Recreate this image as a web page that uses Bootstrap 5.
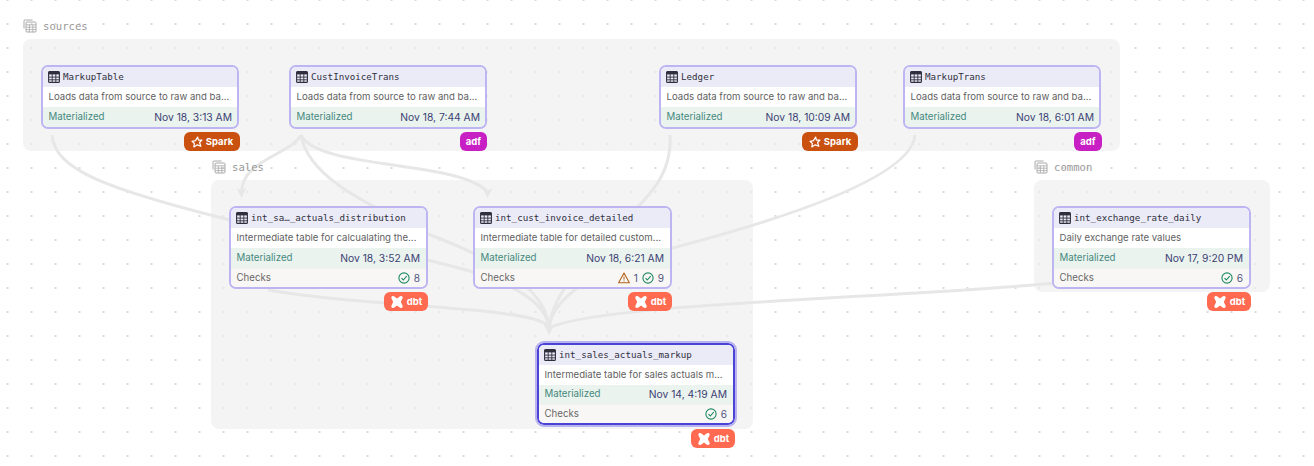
<!DOCTYPE html>
<html lang="en">
<head>
<meta charset="utf-8">
<title>Lineage</title>
<link href="https://cdn.jsdelivr.net/npm/bootstrap@5.3.0/dist/css/bootstrap.min.css" rel="stylesheet">
<style>
html,body{margin:0;height:100%;background:#fff}
.flow{position:relative;width:1314px;height:466px;overflow:hidden;font-family:Inter,"Liberation Sans",sans-serif;background-color:#fff;background-image:radial-gradient(circle at 1px 1px,#dcdcdc 1px,transparent 1.3px);background-size:24px 24px;background-position:6.5px -1px}
.grp{position:absolute;background:rgba(236,236,236,.58);border-radius:8px}
.g1{left:23px;top:39px;width:1097px;height:112px}
.g2{left:211px;top:180px;width:542px;height:249px}
.g3{left:1034px;top:180px;width:236px;height:112px}
.glabel{position:absolute;height:14px;color:#999;font:10.6px/14px "DejaVu Sans Mono",monospace;gap:6px}
.glabel svg{color:#aaa}
.l1{left:23px;top:19px}.l2{left:212px;top:160px}.l3{left:1034px;top:160px}
.edges{position:absolute;left:0;top:0}
.node{position:absolute;width:199px;border:2px solid #bdb5f2;border-radius:7px;overflow:hidden;background:#fff;font-size:9.6px;line-height:14px}
.n1{left:41px;top:65px;width:198px}.n2{left:289px;top:65px;width:198px}.n3{left:659px;top:65px;width:198px}.n4{left:903px;top:65px;width:198px}
.n5{left:229px;top:206px}.n6{left:473px;top:206px}.n7{left:1052px;top:206px}
.node.n8{left:537px;top:343px;width:198px;height:82px;border-color:#4b43d6;outline:2px solid #b8b2f1}
.nhead{height:20px;padding:0 5px;background:#ebebf7;gap:3px;color:#2f2f3d;font:9.2px/20px "DejaVu Sans Mono",monospace}
.n5 .nhead,.n6 .nhead,.n7 .nhead,.n8 .nhead{padding-bottom:1px}
.nrow{height:20px;padding:0 6px 0 5.5px}
.n1 .nrow,.n2 .nrow,.n3 .nrow,.n4 .nrow{padding-right:5px}
.ndesc{color:#5f5f5f;white-space:nowrap}
.nmat{background:#ebf3ef;color:#46897d;font-size:9.7px}
.nmat .when{color:#3b3f73;font-size:10.3px}
.nchk{height:19px;background:#f9f7f5;color:#666;border-top:1px solid #f1f1ee;font-size:9.7px}
.num{color:#4f5480;font-size:10.1px}
.tag{position:absolute;height:19px;border-radius:6px;color:#fff;font:700 9.5px/19px Inter,sans-serif;padding:0;gap:3px}
.spark{background:#c9500f;width:56px}
.adf{background:#c81fc4;width:27px}
.dbt{background:#ff6a50;width:44px}
.t1{left:184px;top:132px}.t2{left:460px;top:132px}.t3{left:802px;top:132px}.t4{left:1074px;top:132px;width:28px}
.t5{left:384px;top:292px}.t6{left:628px;top:292px}.t7{left:1207px;top:292px}.t8{left:691px;top:429px}
</style>
</head>
<body>
<svg width="0" height="0" class="position-absolute">
<defs>
<symbol id="tb" viewBox="0 0 12 12"><rect x=".6" y=".6" width="10.8" height="10.8" rx="1" fill="none" stroke="currentColor" stroke-width="1.1"/><rect x=".6" y=".6" width="10.8" height="2.8" fill="currentColor"/><path d="M.6 6.1h10.8M.6 8.8h10.8M4.2 3v8.4M7.8 3v8.4" fill="none" stroke="currentColor" stroke-width=".9"/></symbol>
<symbol id="gt" viewBox="0 0 14 14"><path d="M1 9.5V2a1 1 0 0 1 1-1h7.5" fill="none" stroke="currentColor" stroke-width="1"/><rect x="3" y="3" width="10" height="10" rx="1" fill="none" stroke="currentColor" stroke-width="1"/><path d="M3 5.800h10M3 8.200h10M3 10.600h10M6.400 5.800V13M9.800 5.800V13" fill="none" stroke="currentColor" stroke-width=".8"/></symbol>
<symbol id="ok" viewBox="0 0 12 12"><circle cx="6" cy="6" r="5.100" fill="none" stroke="#1f8a62" stroke-width="1.100"/><path d="M3.500 6.200 5.300 8 8.700 4.200" fill="none" stroke="#1f8a62" stroke-width="1.100"/></symbol>
<symbol id="wn" viewBox="0 0 12 12"><path d="M6 1 11.400 10.800H.6Z" fill="none" stroke="#b4641c" stroke-width="1.100" stroke-linejoin="round"/><path d="M6 4.400V7.600M6 8.500v1" fill="none" stroke="#b4641c" stroke-width="1"/></symbol>
<symbol id="db" viewBox="0 0 16 16"><path fill="#fff" d="M3 1.200Q4 .8 5 1.600L8 4l3-2.400q1-.8 2-.4 2 .8 1.500 2.300-.3.8-2.100 4.500 1.800 3.700 2.100 4.500.5 1.500-1.500 2.300-1 .4-2-.4L8 12l-3 2.400q-1 .8-2 .4-2-.8-1.500-2.300.3-.8 2.100-4.500-1.800-3.700-2.100-4.500Q1 2 3 1.200Z"/></symbol>
<symbol id="sp" viewBox="0 0 14 14"><path fill="none" stroke="#fff" stroke-width="1.400" stroke-linejoin="round" d="M7.800 1.200 8.600 4.900 12.800 4.700 10 7.600 11.500 12 7.300 10.300 3.300 12.800 4 8.800 1.200 6.300 5.200 5.400Z"/></symbol>
</defs>
</svg>

<main class="flow">
  <div class="grp g1"></div>
  <div class="grp g2"></div>
  <div class="grp g3"></div>

  <svg class="edges" width="1314" height="466" fill="none" stroke="#e7e7e7" stroke-width="3">
    <path d="M52 135C54 170 110 190 230 220C300 237 400 250 473 272C510 285 546 300 549 328"/>
    <path d="M301 135C290 155 242 160 241.500 192"/>
    <path d="M301 135C318 170 460 160 487.500 192"/>
    <path d="M301 135C308 178 370 205 423 232C470 250 546 280 549 328"/>
    <path d="M670 135C672 170 655 190 630 215C590 255 553 290 549 328"/>
    <path d="M915 135C912 175 800 215 665 250C590 270 552 300 549 328"/>
    <path d="M268 290C340 302 400 303 492 312C525 316 546 320 549 328"/>
    <path d="M1056 283C900 298 600 303 549 328"/>
    <path fill="#e7e7e7" stroke="none" d="M236.500 188 241.500 198 246.500 188 241.500 190.500ZM482.500 188 487.500 198 492.500 188 487.500 190.500ZM544 325 549 335.500 554 325 549 327Z"/>
  </svg>

  <div class="glabel l1 d-flex align-items-center"><svg width="14" height="14"><use href="#gt"/></svg>sources</div>
  <div class="glabel l2 d-flex align-items-center"><svg width="14" height="14"><use href="#gt"/></svg>sales</div>
  <div class="glabel l3 d-flex align-items-center"><svg width="14" height="14"><use href="#gt"/></svg>common</div>

  <div class="card node n1">
    <div class="nhead d-flex align-items-center"><svg width="12" height="12"><use href="#tb"/></svg>MarkupTable</div>
    <div class="nrow ndesc d-flex align-items-center">Loads data from source to raw and ba...</div>
    <div class="nrow nmat d-flex align-items-center justify-content-between"><span>Materialized</span><span class="when">Nov 18, 3:13 AM</span></div>
  </div>
  <div class="card node n2">
    <div class="nhead d-flex align-items-center"><svg width="12" height="12"><use href="#tb"/></svg>CustInvoiceTrans</div>
    <div class="nrow ndesc d-flex align-items-center">Loads data from source to raw and ba...</div>
    <div class="nrow nmat d-flex align-items-center justify-content-between"><span>Materialized</span><span class="when">Nov 18, 7:44 AM</span></div>
  </div>
  <div class="card node n3">
    <div class="nhead d-flex align-items-center"><svg width="12" height="12"><use href="#tb"/></svg>Ledger</div>
    <div class="nrow ndesc d-flex align-items-center">Loads data from source to raw and ba...</div>
    <div class="nrow nmat d-flex align-items-center justify-content-between"><span>Materialized</span><span class="when">Nov 18, 10:09 AM</span></div>
  </div>
  <div class="card node n4">
    <div class="nhead d-flex align-items-center"><svg width="12" height="12"><use href="#tb"/></svg>MarkupTrans</div>
    <div class="nrow ndesc d-flex align-items-center">Loads data from source to raw and ba...</div>
    <div class="nrow nmat d-flex align-items-center justify-content-between"><span>Materialized</span><span class="when">Nov 18, 6:01 AM</span></div>
  </div>

  <div class="card node n5">
    <div class="nhead d-flex align-items-center"><svg width="12" height="12"><use href="#tb"/></svg>int_sa…_actuals_distribution</div>
    <div class="nrow ndesc d-flex align-items-center">Intermediate table for calcualating the...</div>
    <div class="nrow nmat d-flex align-items-center justify-content-between"><span>Materialized</span><span class="when">Nov 18, 3:52 AM</span></div>
    <div class="nrow nchk d-flex align-items-center justify-content-between"><span>Checks</span><span class="num d-flex align-items-center gap-1"><svg width="12" height="12"><use href="#ok"/></svg>8</span></div>
  </div>
  <div class="card node n6">
    <div class="nhead d-flex align-items-center"><svg width="12" height="12"><use href="#tb"/></svg>int_cust_invoice_detailed</div>
    <div class="nrow ndesc d-flex align-items-center">Intermediate table for detailed custom...</div>
    <div class="nrow nmat d-flex align-items-center justify-content-between"><span>Materialized</span><span class="when">Nov 18, 6:21 AM</span></div>
    <div class="nrow nchk d-flex align-items-center justify-content-between"><span>Checks</span><span class="num d-flex align-items-center gap-1"><svg width="12" height="12"><use href="#wn"/></svg>1<svg width="12" height="12"><use href="#ok"/></svg>9</span></div>
  </div>
  <div class="card node n7">
    <div class="nhead d-flex align-items-center"><svg width="12" height="12"><use href="#tb"/></svg>int_exchange_rate_daily</div>
    <div class="nrow ndesc d-flex align-items-center">Daily exchange rate values</div>
    <div class="nrow nmat d-flex align-items-center justify-content-between"><span>Materialized</span><span class="when">Nov 17, 9:20 PM</span></div>
    <div class="nrow nchk d-flex align-items-center justify-content-between"><span>Checks</span><span class="num d-flex align-items-center gap-1"><svg width="12" height="12"><use href="#ok"/></svg>6</span></div>
  </div>
  <div class="card node n8">
    <div class="nhead d-flex align-items-center"><svg width="12" height="12"><use href="#tb"/></svg>int_sales_actuals_markup</div>
    <div class="nrow ndesc d-flex align-items-center">Intermediate table for sales actuals m...</div>
    <div class="nrow nmat d-flex align-items-center justify-content-between"><span>Materialized</span><span class="when">Nov 14, 4:19 AM</span></div>
    <div class="nrow nchk d-flex align-items-center justify-content-between"><span>Checks</span><span class="num d-flex align-items-center gap-1"><svg width="12" height="12"><use href="#ok"/></svg>6</span></div>
  </div>

  <span class="badge tag spark t1 d-flex align-items-center justify-content-center"><svg width="12" height="12"><use href="#sp"/></svg>Spark</span>
  <span class="badge tag adf t2 d-flex align-items-center justify-content-center">adf</span>
  <span class="badge tag spark t3 d-flex align-items-center justify-content-center"><svg width="12" height="12"><use href="#sp"/></svg>Spark</span>
  <span class="badge tag adf t4 d-flex align-items-center justify-content-center">adf</span>
  <span class="badge tag dbt t5 d-flex align-items-center justify-content-center"><svg width="14" height="14"><use href="#db"/></svg>dbt</span>
  <span class="badge tag dbt t6 d-flex align-items-center justify-content-center"><svg width="14" height="14"><use href="#db"/></svg>dbt</span>
  <span class="badge tag dbt t7 d-flex align-items-center justify-content-center"><svg width="14" height="14"><use href="#db"/></svg>dbt</span>
  <span class="badge tag dbt t8 d-flex align-items-center justify-content-center"><svg width="14" height="14"><use href="#db"/></svg>dbt</span>
</main>
<script src="https://cdn.jsdelivr.net/npm/bootstrap@5.3.0/dist/js/bootstrap.bundle.min.js"></script>
</body>
</html>
